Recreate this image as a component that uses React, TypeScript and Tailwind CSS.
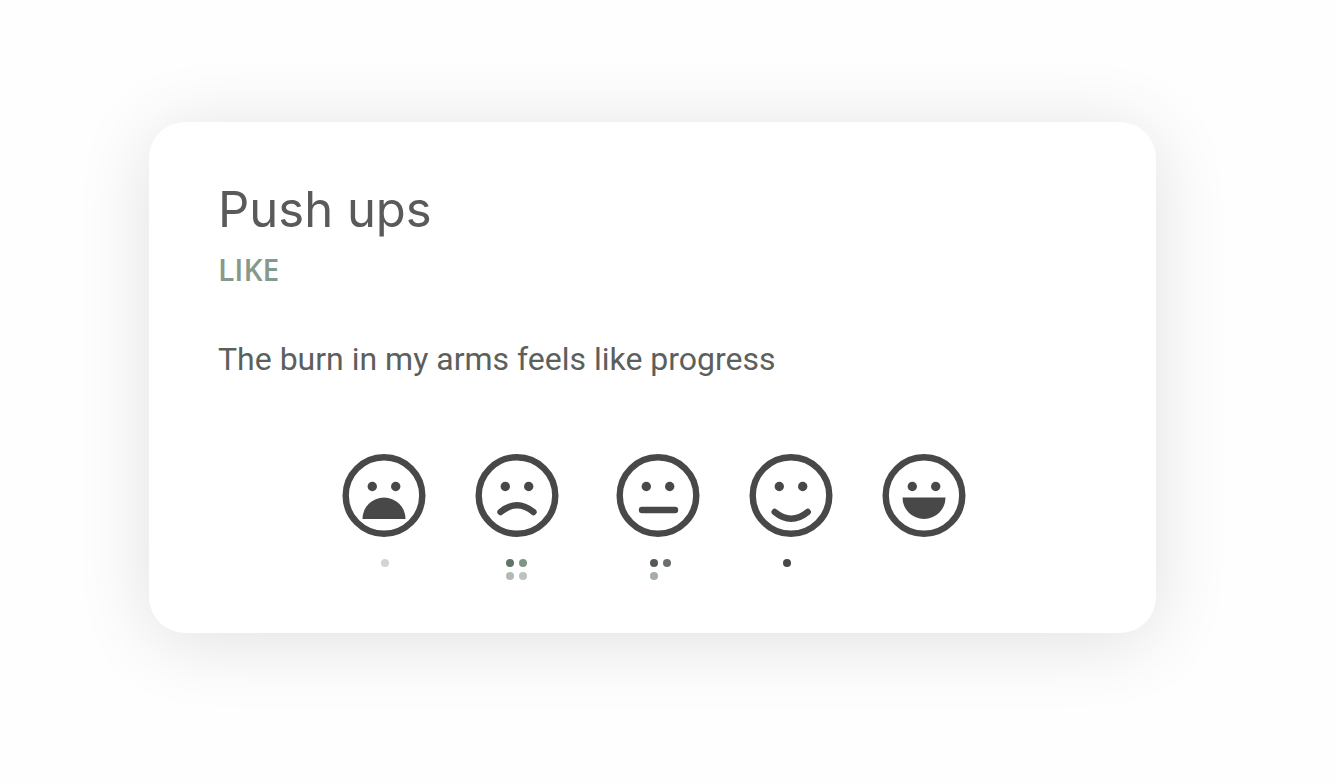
import type { ReactNode } from "react";

type Rating = {
  label: string;
  mouth: ReactNode;
  dots: string[];
  dotsWidth: string;
  spacing: string;
};

const ratings: Rating[] = [
  {
    label: "Awful",
    mouth: <path d="M20.5 66a21.500 21.500 0 0 1 43 0z" fill="currentColor" stroke="none" />,
    dots: ["bg-[#d2d5d2]"],
    dotsWidth: "w-1.5",
    spacing: "",
  },
  {
    label: "Bad",
    mouth: <path d="M25.500 59q16.500-13.500 33 0" />,
    dots: ["bg-[#5f7565]", "bg-[#809685]", "bg-[#b3bab4]", "bg-[#bcc2bd]"],
    dotsWidth: "w-[22px]",
    spacing: "ml-[49px]",
  },
  {
    label: "Neutral",
    mouth: <path d="M26 57h33" />,
    dots: ["bg-[#565856]", "bg-[#6b6f6c]", "bg-[#a3aea6]"],
    dotsWidth: "w-4",
    spacing: "ml-[57px]",
  },
  {
    label: "Good",
    mouth: <path d="M25.700 59q16.500 13.500 33 0" />,
    dots: ["bg-[#484848]"],
    dotsWidth: "w-4",
    spacing: "ml-[49px]",
  },
  {
    label: "Great",
    mouth: <path d="M20.5 44.500h43a21.500 21.500 0 0 1-43 0z" fill="currentColor" stroke="none" />,
    dots: [],
    dotsWidth: "w-4",
    spacing: "ml-[49px]",
  },
];

function Face({ mouth }: { mouth: ReactNode }) {
  return (
    <svg viewBox="0 0 84 84" className="block size-[84px]" fill="none" aria-hidden="true">
      <circle cx="42" cy="42.500" r="38.300" stroke="currentColor" strokeWidth="6.400" />
      <circle cx="30.300" cy="33.500" r="4.700" fill="currentColor" />
      <circle cx="53.700" cy="33.500" r="4.700" fill="currentColor" />
      <g stroke="currentColor" strokeWidth="6.400" strokeLinecap="round">
        {mouth}
      </g>
    </svg>
  );
}

export default function App() {
  return (
    <main className="min-h-screen bg-[#fefefe] pt-[122px] pr-[180px] pb-16 pl-[149px] font-['Roboto',sans-serif]">
      <article className="rounded-[36px] bg-white px-[69px] pt-[58px] pb-[53px] shadow-[0_8px_76px_rgba(0,0,0,0.12)]">
        <h1 className="font-['Inter',sans-serif] text-[49px] leading-[60px] text-[#5a5a5a]">Push ups</h1>
        <p className="mt-3 font-['Open_Sans',sans-serif] text-[30px] leading-9 font-semibold text-[#869a8b]">LIKE</p>
        <p className="mt-[51px] text-[32px] leading-10 text-[#5c605d]">The burn in my arms feels like progress</p>
        <div className="mt-[74px] flex justify-center pl-0.5">
          {ratings.map((rating) => (
            <div key={rating.label} className={`flex flex-col items-center ${rating.spacing}`}>
              <button type="button" aria-label={rating.label} className="text-[#484848]">
                <Face mouth={rating.mouth} />
              </button>
              <div className={`mt-[22px] grid grid-cols-[8px_8px] gap-[5px] ${rating.dotsWidth}`}>
                {rating.dots.map((dot) => (
                  <span key={dot} className={`size-2 rounded-full ${dot}`} />
                ))}
              </div>
            </div>
          ))}
        </div>
      </article>
    </main>
  );
}
